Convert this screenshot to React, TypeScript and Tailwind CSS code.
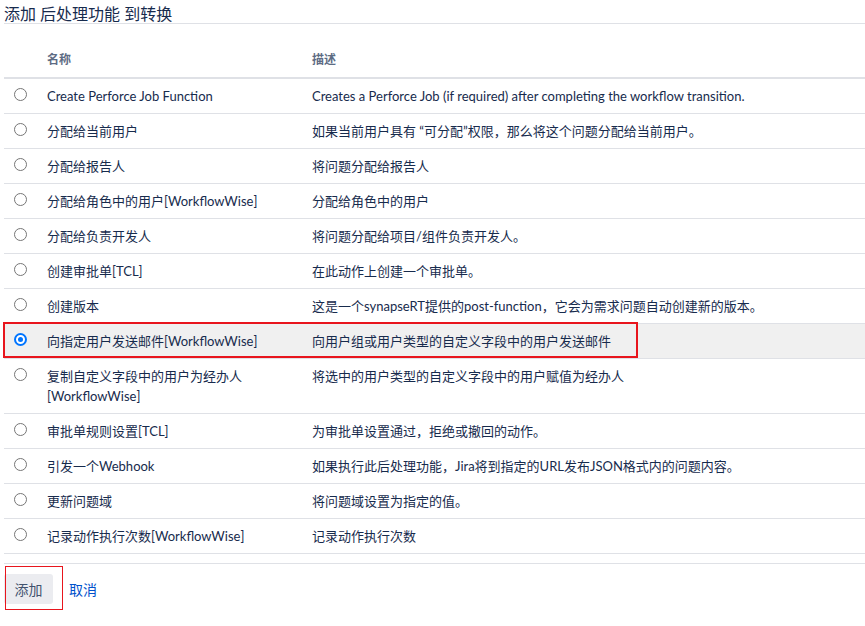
const rows: { name: string; desc: string; selected?: boolean }[] = [
  { name: "Create Perforce Job Function", desc: "Creates a Perforce Job (if required) after completing the workflow transition." },
  { name: "分配给当前用户", desc: "如果当前用户具有 “可分配”权限，那么将这个问题分配给当前用户。" },
  { name: "分配给报告人", desc: "将问题分配给报告人" },
  { name: "分配给角色中的用户[WorkflowWise]", desc: "分配给角色中的用户" },
  { name: "分配给负责开发人", desc: "将问题分配给项目/组件负责开发人。" },
  { name: "创建审批单[TCL]", desc: "在此动作上创建一个审批单。" },
  { name: "创建版本", desc: "这是一个synapseRT提供的post-function，它会为需求问题自动创建新的版本。" },
  { name: "向指定用户发送邮件[WorkflowWise]", desc: "向用户组或用户类型的自定义字段中的用户发送邮件", selected: true },
  { name: "复制自定义字段中的用户为经办人 [WorkflowWise]", desc: "将选中的用户类型的自定义字段中的用户赋值为经办人" },
  { name: "审批单规则设置[TCL]", desc: "为审批单设置通过，拒绝或撤回的动作。" },
  { name: "引发一个Webhook", desc: "如果执行此后处理功能，Jira将到指定的URL发布JSON格式内的问题内容。" },
  { name: "更新问题域", desc: "将问题域设置为指定的值。" },
  { name: "记录动作执行次数[WorkflowWise]", desc: "记录动作执行次数" },
];

const Radio = ({ checked }: { checked?: boolean }) =>
  checked ? (
    <span className="block w-[13px] h-[13px] rounded-full border-2 border-[#0075ff] bg-white p-[2px]">
      <span className="block w-full h-full rounded-full bg-[#0075ff]" />
    </span>
  ) : (
    <span className="block w-[13px] h-[13px] rounded-full border border-[#767676] bg-white" />
  );

export default function App() {
  return (
    <div
      className="relative w-[865px] h-[626px] overflow-hidden bg-white pl-[4px] text-[#172b4d]"
      style={{ fontFamily: 'Lato, "Noto Sans CJK SC", sans-serif' }}
    >
      <h2 className="text-[16px] leading-[20px] pt-[4px] border-b border-[#dfe1e6] font-normal h-[24px]">
        添加 后处理功能 到转换
      </h2>

      <table className="mt-[19px] w-[861px] border-collapse table-fixed text-[13px] leading-[20px]">
        <thead>
          <tr className="border-b-2 border-[#dfe1e6]">
            <th className="w-[36px]" />
            <th className="w-[265px] text-left pl-[7px] py-[7px] text-[12px] font-bold text-[#5e6c84]">名称</th>
            <th className="text-left pl-[7px] py-[7px] text-[12px] font-bold text-[#5e6c84]">描述</th>
          </tr>
        </thead>
        <tbody>
          {rows.map((r) => (
            <tr key={r.name} className={r.selected ? "h-[35px] border-b border-[#dfe1e6] bg-[#f0f0f0]" : "h-[35px] border-b border-[#dfe1e6]"}>
              <td className="pl-[10px] pt-[9px] align-top">
                <Radio checked={r.selected} />
              </td>
              <td className="pl-[7px] pr-[7px] py-[7px] align-top">{r.name}</td>
              <td className="pl-[7px] py-[7px] align-top whitespace-nowrap">{r.desc}</td>
            </tr>
          ))}
        </tbody>
      </table>

      <div className="mt-[9px] border-t border-[#dfe1e6] pt-[10px] flex items-center gap-[16px] text-[14px]">
        <button className="h-[30px] w-[49px] rounded-[3px] bg-[#ebecf0] text-[#42526e]">添加</button>
        <a className="text-[#0052cc]">取消</a>
      </div>

      {/* annotation boxes */}
      <div className="absolute z-10 left-[3px] top-[322px] w-[635px] h-[36px] border-2 border-[#e8151d]" />
      <div className="absolute z-10 left-[5px] top-[566px] w-[58px] h-[44px] border border-[#e8151d]" />
    </div>
  );
}
